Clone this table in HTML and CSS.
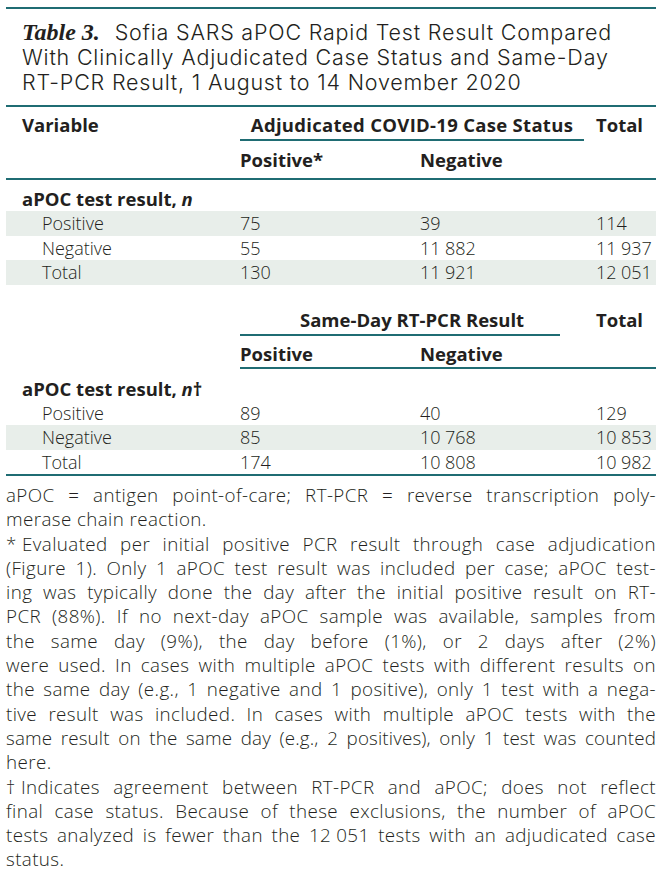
FILE: index.html
```html
<!DOCTYPE html>
<html>
<head>
<meta charset="utf-8">
<link rel="stylesheet" href="styles.css">
</head>
<body>
<div class="page">
  <div class="title">
    <div class="tl"><span class="tnum">Table 3.</span> Sofia SARS aPOC Rapid Test Result Compared</div>
    <div class="tl">With Clinically Adjudicated Case Status and Same-Day</div>
    <div class="tl">RT-PCR Result, 1 August to 14 November 2020</div>
  </div>

  <div class="tbl t1">
    <div class="row hdr1">
      <div class="c1 b">Variable</div>
      <div class="span b">Adjudicated COVID-19 Case Status</div>
      <div class="c4 b">Total</div>
    </div>
    <div class="row hdr2 ruled">
      <div class="c1"></div>
      <div class="b">Positive*</div>
      <div class="b">Negative</div>
      <div></div>
    </div>
    <div class="row sect"><div class="c1 b">aPOC test result, <i>n</i></div></div>
    <div class="row data shade"><div class="lab">Positive</div><div>75</div><div>39</div><div>114</div></div>
    <div class="row data"><div class="lab">Negative</div><div>55</div><div>11&#8197;882</div><div>11&#8197;937</div></div>
    <div class="row data shade"><div class="lab">Total</div><div>130</div><div>11&#8197;921</div><div>12&#8197;051</div></div>
  </div>

  <div class="tbl t2">
    <div class="row hdr1">
      <div class="c1"></div>
      <div class="span span2 b">Same-Day RT-PCR Result</div>
      <div class="c4 b">Total</div>
    </div>
    <div class="row hdr2b">
      <div class="c1"></div>
      <div class="sub">
        <div class="b">Positive</div>
        <div class="b">Negative</div>
      </div>
    </div>
    <div class="row sect2"><div class="c1 b">aPOC test result, <i>n</i>&#8224;</div></div>
    <div class="row data"><div class="lab">Positive</div><div>89</div><div>40</div><div>129</div></div>
    <div class="row data shade"><div class="lab">Negative</div><div>85</div><div>10&#8197;768</div><div>10&#8197;853</div></div>
    <div class="row data"><div class="lab">Total</div><div>174</div><div>10&#8197;808</div><div>10&#8197;982</div></div>
  </div>

  <div class="notes">
    <span class="jl">aPOC = antigen point-of-care; RT-PCR = reverse transcription poly-</span>
    <span class="ll">merase chain reaction.</span>
    <span class="jl"><span class="nj">* Evaluated</span> per initial positive PCR result through case adjudication</span>
    <span class="jl">(Figure 1). Only 1 aPOC test result was included per case; aPOC test-</span>
    <span class="jl">ing was typically done the day after the initial positive result on RT-</span>
    <span class="jl">PCR (88%). If no next-day aPOC sample was available, samples from</span>
    <span class="jl">the same day (9%), the day before (1%), or 2 days after (2%)</span>
    <span class="jl">were used. In cases with multiple aPOC tests with different results on</span>
    <span class="jl">the same day (e.g., 1 negative and 1 positive), only 1 test with a nega-</span>
    <span class="jl">tive result was included. In cases with multiple aPOC tests with the</span>
    <span class="jl tight">same result on the same day (e.g., 2 positives), only 1 test was counted</span>
    <span class="ll">here.</span>
    <span class="jl"><span class="nj">&#8224; Indicates</span> agreement between RT-PCR and aPOC; does not reflect</span>
    <span class="jl">final case status. Because of these exclusions, the number of aPOC</span>
    <span class="jl">tests analyzed is fewer than the 12&#8197;051 tests with an adjudicated case</span>
    <span class="ll">status.</span>
  </div>
</div>
</body>
</html>
```

FILE: styles.css
```css
html, body {
  margin: 0;
  padding: 0;
  background: #ffffff;
}
body {
  font-family: "Open Sans", "Lato", "Liberation Sans", sans-serif;
  color: #231f20;
}
.page {
  width: 650px;
  margin-left: 6px;
  padding-top: 7px;
}
.title {
  border-top: 2px solid #1f6c73;
  border-bottom: 2px solid #1f6c73;
  padding: 11px 0 10px 16px;
  font-family: "Inter", "Open Sans", sans-serif;
  font-size: 21.5px;
  font-weight: 300;
  letter-spacing: 0.8px;
  color: #231f20;
}
.tl {
  height: 25px;
  line-height: 25px;
  white-space: nowrap;
}
.tnum {
  font-family: "Liberation Serif", "Times New Roman", serif;
  font-style: italic;
  font-weight: bold;
  font-size: 24px;
  letter-spacing: 0;
  margin-right: 8px;
}
.b { font-weight: 700; }
.tbl { font-size: 18px; }
.tbl .b { font-size: 18.5px; }
.row {
  display: grid;
  grid-template-columns: 234px 180px 176px 60px;
  align-items: center;
}
.c1 { padding-left: 16px; }
.hdr1 {
  height: 34px;
  align-items: start;
  padding-top: 6px;
  box-sizing: border-box;
}
.hdr1 .c1, .hdr1 .c4 { line-height: 24px; }
.hdr1 .span {
  grid-column: 2 / span 2;
  margin-right: 12px;
  text-align: center;
  line-height: 24px;
  height: 26px;
  border-bottom: 2px solid #1f6c73;
  letter-spacing: 0.3px;
}
.hdr1 .span2 {
  margin-right: 36px;
  text-align: left;
  padding-left: 60px;
  letter-spacing: 0;
}
.hdr2 {
  height: 37px;
}
.ruled { border-bottom: 2px solid #1f6c73; }
.sect {
  height: 31px;
  align-items: end;
  line-height: 24px;
}
.data {
  height: 24.5px;
  line-height: 24.5px;
  font-weight: 300;
}
.data .lab { padding-left: 36px; }
.shade { background: #e8eeea; }
.t2 {
  margin-top: 17px;
  border-bottom: 2px solid #1f6c73;
}
.hdr2b .sub {
  grid-column: 2 / span 3;
  display: grid;
  grid-template-columns: 180px 1fr;
  height: 33px;
  align-items: end;
  padding-bottom: 1px;
  box-sizing: border-box;
  border-bottom: 2px solid #1f6c73;
  line-height: 24px;
}
.sect2 {
  height: 32px;
  align-items: end;
  line-height: 24px;
  box-sizing: border-box;
}
.notes {
  padding-top: 7px;
  font-size: 18.8px;
  font-weight: 300;
  letter-spacing: 0.4px;
}
.jl, .ll {
  display: block;
  height: 24.3px;
  line-height: 24.3px;
  white-space: nowrap;
}
.jl {
  text-align: justify;
  text-align-last: justify;
  word-spacing: -2px;
}
.jl.tight {
  letter-spacing: 0.15px;
  word-spacing: -2.5px;
}
.nj {
  display: inline-block;
  word-spacing: 0;
}
.ll {
  text-align: left;
}
```
